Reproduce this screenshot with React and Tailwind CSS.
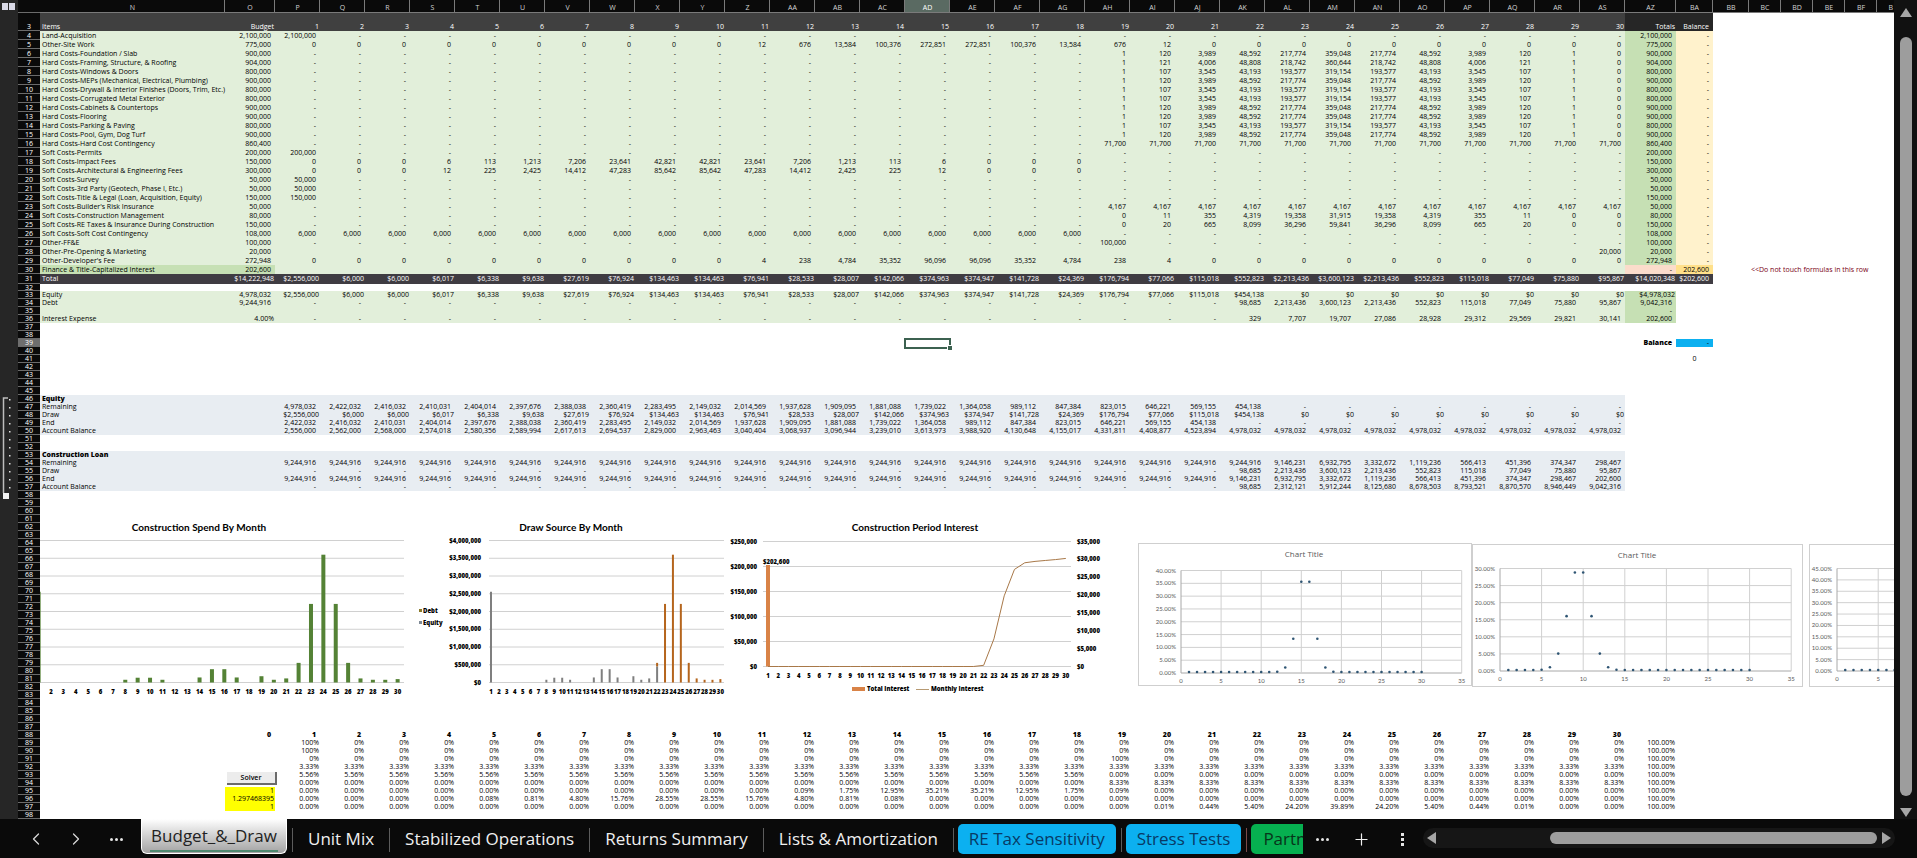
import React from 'react';
import { ChevronLeft, ChevronRight, Plus } from 'lucide-react';

const rep = (v, n) => Array(n).fill(v);
const list = (s) => s.split(' ');

const MONTHS = Array.from({ length: 30 }, (_, i) => String(i + 1));

const curve = (s) => [...rep('-', 18), ...list(s)];
const CURVE_900 = curve('1 120 3,989 48,592 217,774 359,048 217,774 48,592 3,989 120 1 0');
const CURVE_904 = curve('1 121 4,006 48,808 218,742 360,644 218,742 48,808 4,006 121 1 0');
const CURVE_800 = curve('1 107 3,545 43,193 193,577 319,154 193,577 43,193 3,545 107 1 0');

const TOTALS = list(
  '$2,556,000 $6,000 $6,000 $6,017 $6,338 $9,638 $27,619 $76,924 $134,463 $134,463 $76,941 $28,533 $28,007 $142,066 $374,963 $374,947 $141,728 $24,369 $176,794 $77,066 $115,018 $552,823 $2,213,436 $3,600,123 $2,213,436 $552,823 $115,018 $77,049 $75,880 $95,867'
);
const EQUITY = [...TOTALS.slice(0, 21), '$454,138', ...rep('$0', 8)];
const DEBT = [...rep('-', 21), ...list('98,685 2,213,436 3,600,123 2,213,436 552,823 115,018 77,049 75,880 95,867')];
const INTEREST = [...rep('-', 21), ...list('329 7,707 19,707 27,086 28,928 29,312 29,569 29,821 30,141')];

const EQ_REMAINING = [
  ...list(
    '4,978,032 2,422,032 2,416,032 2,410,031 2,404,014 2,397,676 2,388,038 2,360,419 2,283,495 2,149,032 2,014,569 1,937,628 1,909,095 1,881,088 1,739,022 1,364,058 989,112 847,384 823,015 646,221 569,155 454,138'
  ),
  ...rep('-', 8),
];
const EQ_BALANCE = [
  ...list(
    '2,556,000 2,562,000 2,568,000 2,574,018 2,580,356 2,589,994 2,617,613 2,694,537 2,829,000 2,963,463 3,040,404 3,068,937 3,096,944 3,239,010 3,613,973 3,988,920 4,130,648 4,155,017 4,331,811 4,408,877 4,523,894'
  ),
  ...rep('4,978,032', 9),
];
const LOAN_REMAINING = [
  ...rep('9,244,916', 22),
  ...list('9,146,231 6,932,795 3,332,672 1,119,236 566,413 451,396 374,347 298,467'),
];
const LOAN_BALANCE = [
  ...rep('-', 21),
  ...list('98,685 2,312,121 5,912,244 8,125,680 8,678,503 8,793,521 8,870,570 8,946,449 9,042,316'),
];

const SITE_CURVE = [...rep('0.00%', 11), ...list('0.09% 1.75% 12.95% 35.21% 35.21% 12.95% 1.75% 0.09%'), ...rep('0.00%', 11)];
const SOFT_CURVE = [
  ...rep('0.00%', 4),
  ...list('0.08% 0.81% 4.80% 15.76% 28.55% 28.55% 15.76% 4.80% 0.81% 0.08%'),
  ...rep('0.00%', 16),
];
const HARD_CURVE = [...rep('0.00%', 19), ...list('0.01% 0.44% 5.40% 24.20% 39.89% 24.20% 5.40% 0.44% 0.01% 0.00% 0.00%')];

// [label, budget, months, total]
const BUDGET = [
  ['Land-Acquisition', '2,100,000', ['2,100,000', ...rep('-', 29)], '2,100,000'],
  ['Other-Site Work', '775,000', [...rep('0', 10), ...list('12 676 13,584 100,376 272,851 272,851 100,376 13,584 676 12'), ...rep('0', 10)], '775,000'],
  ['Hard Costs-Foundation / Slab', '900,000', CURVE_900, '900,000'],
  ['Hard Costs-Framing, Structure, & Roofing', '904,000', CURVE_904, '904,000'],
  ['Hard Costs-Windows & Doors', '800,000', CURVE_800, '800,000'],
  ['Hard Costs-MEPs (Mechanical, Electrical, Plumbing)', '900,000', CURVE_900, '900,000'],
  ['Hard Costs-Drywall & Interior Finishes (Doors, Trim, Etc.)', '800,000', CURVE_800, '800,000'],
  ['Hard Costs-Corrugated Metal Exterior', '800,000', CURVE_800, '800,000'],
  ['Hard Costs-Cabinets & Countertops', '900,000', CURVE_900, '900,000'],
  ['Hard Costs-Flooring', '900,000', CURVE_900, '900,000'],
  ['Hard Costs-Parking & Paving', '800,000', CURVE_800, '800,000'],
  ['Hard Costs-Pool, Gym, Dog Turf', '900,000', CURVE_900, '900,000'],
  ['Hard Costs-Hard Cost Contingency', '860,400', [...rep('-', 18), ...rep('71,700', 12)], '860,400'],
  ['Soft Costs-Permits', '200,000', ['200,000', ...rep('-', 29)], '200,000'],
  ['Soft Costs-Impact Fees', '150,000', [...list('0 0 0 6 113 1,213 7,206 23,641 42,821 42,821 23,641 7,206 1,213 113 6 0 0 0'), ...rep('-', 12)], '150,000'],
  ['Soft Costs-Architectural & Engineering Fees', '300,000', [...list('0 0 0 12 225 2,425 14,412 47,283 85,642 85,642 47,283 14,412 2,425 225 12 0 0 0'), ...rep('-', 12)], '300,000'],
  ['Soft Costs-Survey', '50,000', ['50,000', ...rep('-', 29)], '50,000'],
  ['Soft Costs-3rd Party (Geotech, Phase I, Etc.)', '50,000', ['50,000', ...rep('-', 29)], '50,000'],
  ['Soft Costs-Title & Legal (Loan, Acquisition, Equity)', '150,000', ['150,000', ...rep('-', 29)], '150,000'],
  ["Soft Costs-Builder's Risk Insurance", '50,000', [...rep('-', 18), ...rep('4,167', 12)], '50,000'],
  ['Soft Costs-Construction Management', '80,000', curve('0 11 355 4,319 19,358 31,915 19,358 4,319 355 11 0 0'), '80,000'],
  ['Soft Costs-RE Taxes & Insurance During Construction', '150,000', curve('0 20 665 8,099 36,296 59,841 36,296 8,099 665 20 0 0'), '150,000'],
  ['Soft Costs-Soft Cost Contingency', '108,000', [...rep('6,000', 18), ...rep('-', 12)], '108,000'],
  ['Other-FF&E', '100,000', [...rep('-', 18), '100,000', ...rep('-', 11)], '100,000'],
  ['Other-Pre-Opening & Marketing', '20,000', [...rep('', 29), '20,000'], '20,000'],
  ["Other-Developer's Fee", '272,948', [...rep('0', 10), ...list('4 238 4,784 35,352 96,096 96,096 35,352 4,784 238 4'), ...rep('0', 10)], '272,948'],
];

// every other row of the sheet that holds something, by row number
const ROWS = {
  33: { kind: 'green', label: 'Equity', budget: '4,978,032', months: EQUITY, total: '$4,978,032' },
  34: { kind: 'green', label: 'Debt', budget: '9,244,916', months: DEBT, total: '9,042,316' },
  35: { kind: 'green', total: '-' },
  36: { kind: 'green', label: 'Interest Expense', budget: '4.00%', months: INTEREST, total: '202,600' },
  46: { kind: 'blue', label: 'Equity', bold: true },
  47: { kind: 'blue', label: 'Remaining', months: EQ_REMAINING },
  48: { kind: 'blue', label: 'Draw', months: EQUITY },
  49: { kind: 'blue', label: 'End', months: [...EQ_REMAINING.slice(1), '-'] },
  50: { kind: 'blue', label: 'Account Balance', months: EQ_BALANCE },
  53: { kind: 'blue', label: 'Construction Loan', bold: true },
  54: { kind: 'blue', label: 'Remaining', months: LOAN_REMAINING },
  55: { kind: 'blue', label: 'Draw', months: DEBT },
  56: { kind: 'blue', label: 'End', months: [...LOAN_REMAINING.slice(1), '202,600'] },
  57: { kind: 'blue', label: 'Account Balance', months: LOAN_BALANCE },
  88: { budget: '0', months: MONTHS, bold: true, inset: true },
  89: { months: ['100%', ...rep('0%', 29)], total: '100.00%' },
  90: { months: ['100%', ...rep('0%', 29)], total: '100.00%' },
  91: { months: [...rep('0%', 18), '100%', ...rep('0%', 11)], total: '100.00%' },
  92: { months: rep('3.33%', 30), total: '100.00%' },
  93: { months: [...rep('5.56%', 18), ...rep('0.00%', 12)], total: '100.00%' },
  94: { months: [...rep('0.00%', 18), ...rep('8.33%', 12)], total: '100.00%' },
  95: { budget: '1', months: SITE_CURVE, total: '100.00%', input: true },
  96: { budget: '1.297468395', months: SOFT_CURVE, total: '100.00%', input: true },
  97: { budget: '1', months: HARD_CURVE, total: '100.00%', input: true },
};

const COLUMNS = list(
  'N O P Q R S T U V W X Y Z AA AB AC AD AE AF AG AH AI AJ AK AL AM AN AO AP AQ AR AS AZ BA BB BC BD BE BF'
);

// currency and percent formats run to the cell edge, plain ones keep a gap
const pad = (v) => (/[$%]/.test(v) ? 'pr-px' : 'pr-1');

function RowHead({ n }) {
  const on = n === 39;
  return (
    <th
      scope="row"
      className={`text-center font-normal text-white shadow-[inset_0_-1px_#6b6b6b] ${on ? 'bg-[#6e6e6e]' : 'bg-[#0a0a0a]'}`}
    >
      {n}
    </th>
  );
}

function BudgetRow({ n, row }) {
  const [label, budget, months, total] = row;
  return (
    <tr className="h-[9px] leading-[9px]">
      <RowHead n={n} />
      <td className="bg-[#e2efda] pl-0.5">{label}</td>
      <td className="bg-[#e2efda] pr-1 text-right">{budget}</td>
      {months.map((v, i) => (
        <td key={i} className="bg-[#e2efda] pr-1 text-right">{v}</td>
      ))}
      <td className="bg-[#c6e0b4] pr-1 text-right">{total}</td>
      <td className="bg-[#fff2cc] pr-1 text-right">-</td>
      <td colSpan={6} />
    </tr>
  );
}

function SheetRow({ n, row = {} }) {
  const { kind, label, budget, months, total, bold, inset, input } = row;
  const fill = kind === 'green' ? 'bg-[#e2efda]' : kind === 'blue' ? 'bg-[#e8edf2]' : '';
  const weight = bold ? 'font-extrabold' : '';
  return (
    <tr className="h-2 leading-[8px]">
      <RowHead n={n} />
      {label || budget || months || total ? (
        <>
          <td className={`pl-0.5 ${fill} ${weight}`}>{label}</td>
          <td className={`text-right ${input ? 'bg-[#ffff00] pr-px' : pad(budget)} ${fill} ${weight}`}>{budget}</td>
          {(months || rep('', 30)).map((v, i) => (
            <td key={i} className={`text-right ${inset ? 'pr-1' : pad(v)} ${fill} ${weight}`}>{v}</td>
          ))}
          <td className={`text-right ${pad(total)} ${kind === 'green' ? 'bg-[#c6e0b4]' : ''}`}>{total}</td>
          <td colSpan={7} />
        </>
      ) : (
        <td colSpan={40} />
      )}
    </tr>
  );
}

function Sheet() {
  return (
    <table className="w-full table-fixed text-[7px] font-medium whitespace-nowrap text-black">
      <colgroup>
        <col className="w-[22px]" />
        <col className="w-[185px]" />
        <col className="w-[50px]" />
        {MONTHS.map((m) => (
          <col key={m} className="w-[45px]" />
        ))}
        <col className="w-[51px]" />
        <col className="w-[37px]" />
        <col className="w-9" />
        {list('BC BD BE BF').map((c) => (
          <col key={c} className="w-8" />
        ))}
        <col />
      </colgroup>
      <thead>
        <tr className="h-[13px] bg-[#0a0a0a] leading-[11px] text-[#d4d4d4]">
          <th className="shadow-[inset_0_-1px_#6b6b6b]" />
          {COLUMNS.map((c) => (
            <th
              key={c}
              scope="col"
              className={`pt-0.5 text-center font-medium shadow-[inset_-1px_-1px_#7a7a7a] ${c === 'AD' ? 'bg-[#5a6a62] text-white' : ''}`}
            >
              {c}
            </th>
          ))}
          <th scope="col" className="pt-0.5 pr-px text-right font-medium shadow-[inset_0_-1px_#7a7a7a]">B</th>
        </tr>
      </thead>
      <tbody>
        <tr className="h-[18px] bg-[#404040] align-bottom leading-[9px] text-white">
          <RowHead n={3} />
          <td className="pl-0.5">Items</td>
          <td className="pr-px text-right">Budget</td>
          {MONTHS.map((m) => (
            <td key={m} className="pr-px text-right">{m}</td>
          ))}
          <td className="bg-[#262626] pr-px text-right">Totals</td>
          <td className="bg-[#262626] pr-1 text-right">Balance</td>
          <td colSpan={6} className="bg-white" />
        </tr>
        {BUDGET.map((row, i) => (
          <BudgetRow key={row[0]} n={i + 4} row={row} />
        ))}
        <tr className="h-[9px] leading-[9px]">
          <RowHead n={30} />
          <td className="bg-[#c6e0b4] pl-0.5">Finance &amp; Title-Capitalized Interest</td>
          <td className="bg-[#c6e0b4] pr-1 text-right">202,600</td>
          <td colSpan={30} className="bg-[#e2efda]" />
          <td className="bg-[#fbdccb] pr-1 text-right">-</td>
          <td className="bg-[#ffe08a] pr-1 text-right">202,600</td>
          <td />
          <td colSpan={5} className="pl-0.5 text-[#7a0014]">&lt;&lt;Do not touch formulas in this row</td>
        </tr>
        <tr className="h-2.5 bg-[#3f3c42] leading-[10px] text-white">
          <RowHead n={31} />
          <td className="pl-0.5">Total</td>
          <td className="pr-px text-right">$14,222,948</td>
          {TOTALS.map((v, i) => (
            <td key={i} className="pr-px text-right">{v}</td>
          ))}
          <td className="pr-px text-right">$14,020,348</td>
          <td className="pr-1 text-right">$202,600</td>
          <td colSpan={6} className="bg-white" />
        </tr>
        <tr className="h-[7px] leading-[7px]">
          <RowHead n={32} />
          <td colSpan={40} />
        </tr>
        {Array.from({ length: 6 }, (_, i) => (
          <SheetRow key={i} n={i + 33} row={ROWS[i + 33]} />
        ))}
        <tr className="h-2 leading-[8px]">
          <RowHead n={39} />
          <td colSpan={16} />
          <td className="relative">
            <div className="absolute -inset-x-px -top-px -bottom-0.5 border-2 border-[#3c6150]">
              <div className="absolute -right-1 -bottom-1 h-[6px] w-[6px] border border-white bg-[#3c6150]" />
            </div>
          </td>
          <td colSpan={15} />
          <td className="pr-1 text-right font-extrabold">Balance</td>
          <td className="bg-[#0cb0f0] pr-1 text-right">-</td>
          <td colSpan={6} />
        </tr>
        <SheetRow n={40} />
        <tr className="h-2 leading-[8px]">
          <RowHead n={41} />
          <td colSpan={33} />
          <td className="text-center">0</td>
          <td colSpan={6} />
        </tr>
        {Array.from({ length: 57 }, (_, i) => (
          <SheetRow key={i} n={i + 42} row={ROWS[i + 42]} />
        ))}
      </tbody>
    </table>
  );
}

const num = (s) => Number(s.replace(/[$,%]/g, '')) || 0;
const TITLE = "fill-black font-['Lato'] text-[10px] font-bold";
const LABEL = 'fill-black text-[6px] font-extrabold';

// bars shorter than this do not show
const barHeight = (v) => {
  const h = (v / 4000000) * 142;
  return h < 1.2 ? 0 : h;
};

function SpendChart() {
  // month 1 is cut by the edge of the sheet
  const x = (k) => 11 + (k - 2) * 12.38;
  return (
    <svg viewBox="0 0 370 180" role="img" aria-label="Construction Spend By Month" className="h-[180px] w-[370px]">
      <text x="159" y="11" textAnchor="middle" className={TITLE}>Construction Spend By Month</text>
      {Array.from({ length: 9 }, (_, i) => (
        <line key={i} x1="0" x2="364" y1={20.5 + i * 17.75} y2={20.5 + i * 17.75} stroke="#d0d0d0" />
      ))}
      {TOTALS.map((t, i) => (
        <rect key={i} x={x(i + 1) - 2} y={162.5 - barHeight(num(t))} width="4" height={barHeight(num(t))} fill="#548235" />
      ))}
      {MONTHS.slice(1).map((m, i) => (
        <text key={m} x={x(i + 2)} y="174" textAnchor="middle" className={LABEL}>{m}</text>
      ))}
    </svg>
  );
}

function DrawChart() {
  const x = (k) => 76 + (k - 1) * 7.91;
  return (
    <svg viewBox="0 0 320 180" role="img" aria-label="Draw Source By Month" className="h-[180px] w-[320px]">
      <text x="156" y="11" textAnchor="middle" className={TITLE}>Draw Source By Month</text>
      <rect x="4" y="89" width="3" height="3" fill="#8a7a2a" />
      <text x="8" y="93" className={LABEL}>Debt</text>
      <rect x="4" y="101" width="3" height="3" fill="#7f8a96" />
      <text x="8" y="105" className={LABEL}>Equity</text>
      {list('$4,000,000 $3,500,000 $3,000,000 $2,500,000 $2,000,000 $1,500,000 $1,000,000 $500,000 $0').map((t, i) => (
        <g key={t}>
          <line x1="74" x2="309" y1={20.5 + i * 17.75} y2={20.5 + i * 17.75} stroke="#d0d0d0" />
          <text x="66" y={22.5 + i * 17.75} textAnchor="end" className={LABEL}>{t}</text>
        </g>
      ))}
      {MONTHS.map((m, i) => {
        const eq = barHeight(num(EQUITY[i]));
        const debt = barHeight(num(DEBT[i]));
        return (
          <g key={m}>
            <rect x={x(i + 1) - 1} y={162.5 - eq} width="2" height={eq} fill="#7f7f7f" />
            <rect x={x(i + 1) - 1} y={162.5 - eq - debt} width="2" height={debt} fill="#b5651d" />
            <text x={x(i + 1)} y="174" textAnchor="middle" className={LABEL}>{m}</text>
          </g>
        );
      })}
    </svg>
  );
}

function InterestChart() {
  const x = (k) => 43 + (k - 1) * 10.27;
  const y = (v) => 146.5 - (v / 35000) * 125.5;
  const points = INTEREST.map((v, i) => `${x(i + 1)},${y(num(v))}`).join(' ');
  return (
    <svg viewBox="0 0 384 180" role="img" aria-label="Construction Period Interest" className="h-[180px] w-[384px]">
      <text x="190" y="11" textAnchor="middle" className={TITLE}>Construction Period Interest</text>
      {list('$250,000 $200,000 $150,000 $100,000 $50,000 $0').map((t, i) => (
        <g key={t}>
          <line x1="38" x2="346" y1={21.5 + i * 25} y2={21.5 + i * 25} stroke="#d0d0d0" />
          <text x="32" y={23.5 + i * 25} textAnchor="end" className={LABEL}>{t}</text>
        </g>
      ))}
      {list('$35,000 $30,000 $25,000 $20,000 $15,000 $10,000 $5,000 $0').map((t, i) => (
        <text key={t} x="352" y={23.5 + i * 17.9} className={LABEL}>{t}</text>
      ))}
      <rect x="41" y="45" width="4" height="101.5" fill="#d98347" />
      <polyline points={points} fill="none" stroke="#a87848" />
      <text x="38" y="44" className={LABEL}>$202,600</text>
      {MONTHS.map((m, i) => (
        <text key={m} x={x(i + 1)} y="158" textAnchor="middle" className={LABEL}>{m}</text>
      ))}
      <rect x="127" y="167" width="13" height="4" fill="#d98347" />
      <text x="142" y="171" className={LABEL}>Total Interest</text>
      <line x1="191" x2="204" y1="169.5" y2="169.5" stroke="#b79a72" />
      <text x="206" y="171" className={LABEL}>Monthly Interest</text>
    </svg>
  );
}

function ScatterChart({ width, x0, step, y0, y1, max, data, titleX }) {
  const ticks = Array.from({ length: max / 5 + 1 }, (_, i) => i * 5);
  const y = (v) => y1 - (v / max) * (y1 - y0);
  const x = (v) => x0 + (v / 5) * step;
  return (
    <svg width={width} height="143" viewBox={`0 0 ${width} 143`} role="img" aria-label="Chart Title" className="bg-white">
      <rect x="0.5" y="0.5" width={width - 1} height="142" fill="none" stroke="#cfcfcf" />
      <text x={titleX} y="14" textAnchor="middle" className="fill-[#595959] text-[8px]">Chart Title</text>
      {ticks.map((t) => (
        <g key={t}>
          <line x1={x(0)} x2={x(35)} y1={y(t)} y2={y(t)} stroke={t ? '#d0d0d0' : '#a8a8a8'} />
          <text x={x(0) - 5} y={y(t) + 2} textAnchor="end" className="fill-[#595959] font-['Lato'] text-[6px]">{t.toFixed(2)}%</text>
        </g>
      ))}
      {[0, 5, 10, 15, 20, 25, 30, 35].map((t) => (
        <g key={t}>
          <line x1={x(t)} x2={x(t)} y1={y0} y2={y1} stroke={t ? '#d0d0d0' : '#a8a8a8'} />
          <text x={x(t)} y={y1 + 10} textAnchor="middle" className="fill-[#595959] font-['Lato'] text-[6px]">{t}</text>
        </g>
      ))}
      {data.map((v, i) => (
        <circle key={i} cx={x(i + 1)} cy={y(num(v)) - 1} r="1.3" fill="#2f5573" />
      ))}
    </svg>
  );
}

function Outline() {
  return (
    <div className="w-[18px] shrink-0 bg-[#262626]">
      <div className="flex h-[395px] items-start gap-px pt-[3px] pl-0.5">
        <button aria-label="Show level 1" className="h-[7px] w-[6px] bg-[#d9d9e6]" />
        <button aria-label="Show level 2" className="h-[7px] w-[6px] bg-[#d9d9e6]" />
      </div>
      <svg viewBox="0 0 18 106" className="h-[106px] w-[18px]">
        <path d="M8 3H3.5V98" fill="none" stroke="#bdbdbd" strokeWidth="1.5" />
        {Array.from({ length: 12 }, (_, i) => (
          <rect key={i} x="9" y={4 + i * 8} width="1.5" height="1.5" fill="#e5e5e5" />
        ))}
        <rect x="3" y="98" width="6" height="6" fill="#f2f2f2" />
      </svg>
    </div>
  );
}

const PLAIN_TABS = ['Unit Mix', 'Stabilized Operations', 'Returns Summary', 'Lists & Amortization'];
const BLUE_TABS = ['RE Tax Sensitivity', 'Stress Tests'];

function Dots({ vertical }) {
  return (
    <span className={`flex gap-0.5 ${vertical ? 'flex-col' : ''}`}>
      {[0, 1, 2].map((i) => (
        <span key={i} className={`h-[3px] w-[3px] bg-[#e5e5e5] ${vertical ? '' : 'rounded-full'}`} />
      ))}
    </span>
  );
}

function TabBar() {
  return (
    <div className="flex h-[39px] shrink-0 items-start bg-[#0a0a0a] text-[17px] leading-[30px] whitespace-nowrap text-[#f0f0f0]">
      <div className="flex h-10 w-[141px] shrink-0 items-center pl-4 text-[#d8d8d8]">
        <button aria-label="Previous sheet" className="flex w-10 justify-center">
          <ChevronLeft size={20} strokeWidth={1.5} />
        </button>
        <button aria-label="Next sheet" className="flex w-10 justify-center">
          <ChevronRight size={20} strokeWidth={1.5} />
        </button>
        <button aria-label="More sheets" className="flex w-10 justify-center">
          <Dots />
        </button>
      </div>
      <nav className="flex shrink-0 items-start">
        <button className="mr-[5px] h-[35px] w-[146px] rounded-b-md border border-t-0 border-white bg-linear-to-b from-white to-[#a3a3a3] px-2 text-[#222]">
          <span className="block border-b-2 border-[#4f8a70] leading-[29px]">Budget_&amp;_Draw</span>
        </button>
        {PLAIN_TABS.map((name) => (
          <div key={name} className="flex items-start pt-[5px]">
            <span className="mt-1 h-6 w-px bg-[#5c5c5c]" />
            <button className="px-[15px]">{name}</button>
          </div>
        ))}
        {BLUE_TABS.map((name) => (
          <div key={name} className="flex items-start pt-[5px] pr-[5px]">
            <span className="mt-1 mr-1 h-6 w-px bg-[#5c5c5c]" />
            <button className="rounded-[5px] bg-[#0cb0f0] px-[11px] text-[#083a66]">{name}</button>
          </div>
        ))}
        <div className="flex w-[57px] items-start pt-[5px]">
          <span className="mt-1 mr-1 h-6 w-px bg-[#7a4a4a]" />
          <button className="min-w-0 flex-1 overflow-hidden rounded-l-[5px] bg-[#06b050] pl-3 text-left text-[#06351a]">Partners</button>
        </div>
      </nav>
      <div className="flex h-10 shrink-0 items-center">
        <button aria-label="More tabs" className="flex w-[38px] justify-center">
          <Dots />
        </button>
        <button aria-label="New sheet" className="flex w-[41px] justify-center">
          <Plus size={19} strokeWidth={1.5} />
        </button>
        <button aria-label="Resize" className="flex w-[41px] justify-center">
          <Dots vertical />
        </button>
      </div>
      <div className="mt-[9px] mr-[22px] flex h-5 min-w-0 flex-1 items-center gap-1 rounded-full bg-[#161616] px-1">
        <svg viewBox="0 0 10 12" className="h-3 w-2.5"><path d="M9 0v12L0 6z" fill="#a6a6a6" /></svg>
        <div className="flex flex-1 justify-end">
          <div className="h-3 w-3/4 rounded-full bg-[#9d9d9d]" />
        </div>
        <svg viewBox="0 0 10 12" className="h-3 w-2.5"><path d="M1 0v12l9-6z" fill="#a6a6a6" /></svg>
      </div>
    </div>
  );
}

export default function App() {
  return (
    <div className="flex h-screen flex-col overflow-hidden bg-[#0a0a0a] font-['Open_Sans','Noto_Sans',sans-serif]">
      <div className="flex min-h-0 flex-1">
        <Outline />
        <main className="relative min-w-0 flex-1 overflow-hidden bg-white">
          <Sheet />
          <div className="absolute top-[520px] left-[22px]"><SpendChart /></div>
          <div className="absolute top-[520px] left-[397px]"><DrawChart /></div>
          <div className="absolute top-[520px] left-[707px]"><InterestChart /></div>
          <div className="absolute top-[543px] left-[1120px]">
            <ScatterChart width={334} x0={43} step={40.1} y0={27.5} y1={130} max={40} data={SITE_CURVE} titleX={166} />
          </div>
          <div className="absolute top-[544px] left-[1454px]">
            <ScatterChart width={331} x0={28} step={41.6} y0={24.5} y1={127} max={30} data={SOFT_CURVE} titleX={165} />
          </div>
          <div className="absolute top-[544px] left-[1791px]">
            <ScatterChart width={331} x0={28} step={41.2} y0={24.5} y1={127} max={45} data={HARD_CURVE} titleX={165} />
          </div>
          <button className="absolute top-[772px] left-[209px] h-[13px] w-[50px] border-r-2 border-b-2 border-[#6b6b6b] bg-[#ececec] text-[7px] leading-[11px] font-semibold text-black">
            Solver
          </button>
        </main>
        <div className="flex w-[23px] shrink-0 flex-col items-center gap-2 bg-[#111] pt-2 pb-0.5">
          <svg viewBox="0 0 12 9" className="h-[9px] w-3"><path d="M6 0l6 9H0z" fill="#a6a6a6" /></svg>
          <div className="mt-3 w-3 flex-1 rounded-full bg-[#9d9d9d]" />
          <svg viewBox="0 0 12 9" className="mt-1 h-[9px] w-3"><path d="M6 9l6-9H0z" fill="#a6a6a6" /></svg>
        </div>
      </div>
      <TabBar />
    </div>
  );
}
